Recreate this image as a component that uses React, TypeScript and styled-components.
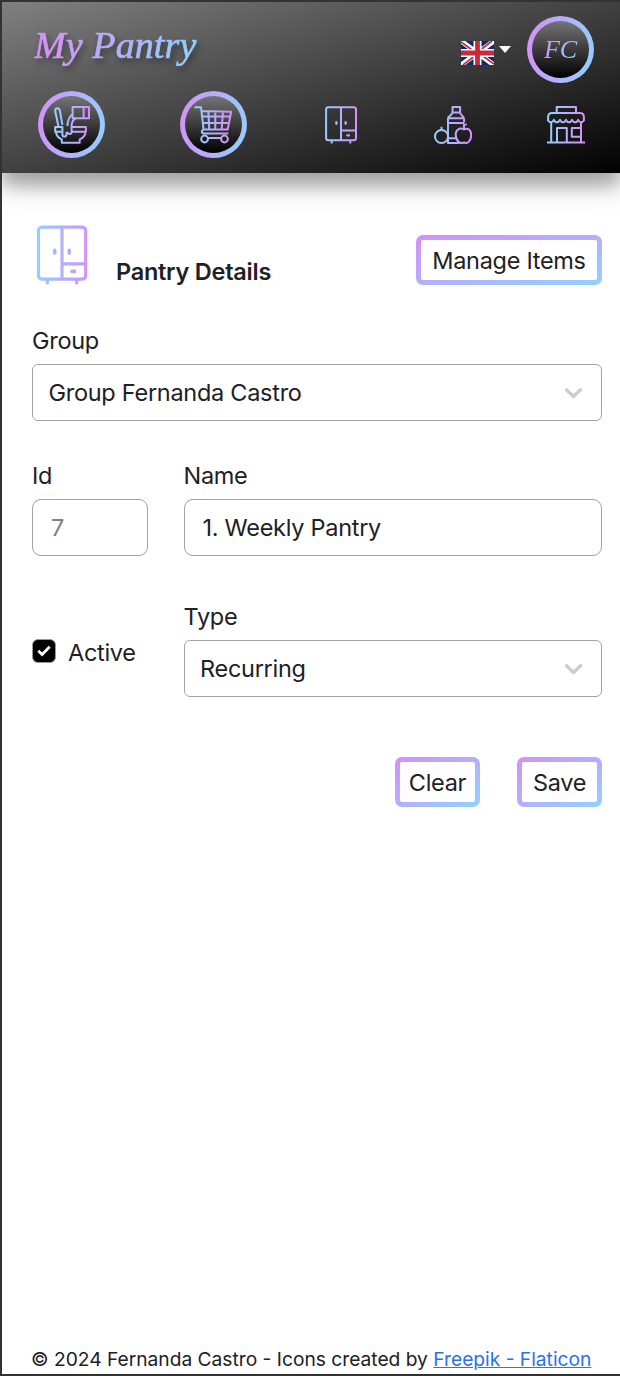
import React from "react";
import styled, { createGlobalStyle, css } from "styled-components";

const PINK = "#d68ff7";
const BLUE = "#91d1ff";

const GlobalStyle = createGlobalStyle`
  *, *::before, *::after { box-sizing: border-box; }
  body {
    margin: 0;
    background: #fff;
    color: #212124;
    font-family: Inter, "Liberation Sans", sans-serif;
    font-size: 24px;
  }
`;

const Page = styled.div`
  display: flex;
  flex-direction: column;
  height: 1376px;
  overflow: hidden;
  border: 2px solid #333335;
  border-right: 0;
  background: #fff;
`;

const Header = styled.header`
  display: flex;
  flex-direction: column;
  gap: 8px;
  height: 171px;
  padding: 14px 26px 0 32px;
  background: linear-gradient(to bottom right, #808080, #020202);
  box-shadow: 0 14px 26px rgba(0, 0, 0, 0.22), 0 12px 14px rgba(0, 0, 0, 0.2);
`;

const TopBar = styled.div`
  display: flex;
  align-items: center;
  height: 67px;
`;

const Logo = styled.h1`
  flex: 1;
  margin: 0 0 9px;
  font: italic 400 38px/50px "Apple Chancery", "Lucida Calligraphy", "Liberation Serif", serif;
  letter-spacing: 0.1px;
  filter: drop-shadow(2px 4px 3px rgba(0, 0, 0, 0.4));

  span {
    color: transparent;
    background: linear-gradient(to right, ${PINK}, ${BLUE});
    background-clip: text;
    padding-right: 4px;
    -webkit-text-stroke: 0.7px transparent;
  }
`;

const Language = styled.button`
  display: flex;
  align-items: center;
  gap: 5px;
  margin: 6px 16px 0 0;
  padding: 0;
  border: 0;
  background: none;
`;

const Caret = styled.i`
  margin-top: -7px;
  border: 6.5px solid transparent;
  border-top: 7px solid #fff;
  border-bottom: 0;
`;

const Ring = styled.div`
  display: grid;
  place-items: center;
  width: 67px;
  height: 67px;
  border: 5px solid transparent;
  border-radius: 50%;
  background: linear-gradient(#757575, #000) padding-box,
    linear-gradient(100deg, ${PINK}, ${BLUE}) border-box;
`;

const Initials = styled.span`
  font: italic 400 26px/30px "Apple Chancery", "Lucida Calligraphy", "Liberation Serif", serif;
  color: transparent;
  background: linear-gradient(to right, ${PINK}, ${BLUE});
  background-clip: text;
  padding: 0 2px;
`;

const Nav = styled.nav`
  display: flex;
  align-items: center;
  justify-content: space-between;
  height: 67px;
  margin: 0 9px 0 4px;
`;

const Main = styled.main`
  flex: 1;
  padding: 52px 18px 0 30px;
`;

const TitleRow = styled.div`
  display: flex;
  align-items: flex-start;
  height: 103px;
`;

const Title = styled.h2`
  flex: 1;
  margin: 32px 0 0 24px;
  font-size: 23.5px;
  font-weight: 600;
  line-height: 29px;
  letter-spacing: -0.25px;
`;

const Button = styled.button<{ $width: number }>`
  width: ${(p) => p.$width}px;
  height: 50px;
  padding: 0;
  border: 5px solid transparent;
  border-radius: 7px;
  background: linear-gradient(#fff, #fff) padding-box,
    linear-gradient(to bottom right, ${PINK}, ${BLUE}) border-box;
  color: #212124;
  font: inherit;
  font-size: 23.5px;
  letter-spacing: -0.3px;
  white-space: nowrap;
`;

const ManageButton = styled(Button)`
  margin-top: 10px;
`;

const FormGrid = styled.div`
  display: grid;
  grid-template-columns: 115.5px 418.5px;
  column-gap: 36px;
`;

const Field = styled.label<{ $height: number; $wide?: boolean }>`
  display: flex;
  flex-direction: column;
  height: ${(p) => p.$height}px;
  ${(p) => p.$wide && css`grid-column: 1 / -1;`}
`;

const Caption = styled.span`
  height: 36px;
  font-size: 23.5px;
  line-height: 26px;
  letter-spacing: -0.3px;
`;

const controlBox = css`
  width: 100%;
  height: 57px;
  border: 1.5px solid #a3a3a3;
  background: #fff;
  color: #212124;
  font: inherit;
  font-size: 23.5px;
  letter-spacing: -0.28px;
`;

const Input = styled.input`
  ${controlBox}
  padding: 0 18px;
  border-radius: 9px;
  &:disabled { color: #808080; }
`;

const Select = styled.div`
  ${controlBox}
  display: flex;
  align-items: center;
  justify-content: space-between;
  padding: 0 18px 0 15.5px;
  border-radius: 6px;
`;

const CheckRow = styled.label`
  display: flex;
  align-items: center;
  gap: 12px;
  height: 30px;
  margin-top: 33px;
  font-size: 23.5px;
  letter-spacing: -0.3px;
`;

const CheckBox = styled.span`
  display: grid;
  place-items: center;
  width: 24px;
  height: 24px;
  margin-top: -3px;
  border: 1.5px solid #999;
  border-radius: 6px;
  background: #000;
`;

const Actions = styled.div`
  display: flex;
  justify-content: flex-end;
  gap: 37px;
  margin-top: 12px;
`;

const Footer = styled.footer`
  height: 30px;
  padding-left: 29px;
  font-size: 19.2px;
  line-height: 31px;
  white-space: nowrap;

  a { color: #2a70f5; text-decoration: underline; }
`;

function Icon({ id, size = 38, children }: { id: string; size?: number; children: React.ReactNode }) {
  return (
    <svg width={size} height={size} viewBox="0 0 38 38" fill="none" stroke={`url(#${id})`} strokeWidth="2" strokeLinejoin="round">
      <defs>
        <linearGradient id={id} gradientUnits="userSpaceOnUse" x1="1" y1="0" x2="37" y2="0">
          <stop stopColor={BLUE} />
          <stop offset="1" stopColor={PINK} />
        </linearGradient>
      </defs>
      {children}
    </svg>
  );
}

const BowlIcon = () => (
  <Icon id="bowl">
    <path d="M5.6 21 2.3 5.7C1.4 1.7 6.1 1.1 6.9 4.7L9.4 19" />
    <path d="M19.6 1.1H36v11.1H19.6zM30.6 1.1v11.1M19.6 8c-3.2 2.2-4.9 6.4-5.2 12M23.4 12.2c-3.4 1-4.7 3.9-4.8 7.8" />
    <path d="M9.7 21H2.2v4.7h7.2M18.6 21h14.3v4.7H18.6M2.9 25.7c.4 3.6 2.3 6.4 5.9 7.7v3.4h17.9v-3.4c3.6-1.3 5.6-4.1 6-7.7" />
    <path d="M9.4 20.5v8.3c0 2.4 4 2.4 4 0v-2h1.4c.2 1.7 3.8 1.5 3.8-.9v-6" />
  </Icon>
);

const CartIcon = () => (
  <Icon id="cart">
    <path d="M.5 1.2H7l2.6 22.6M7.5 4.9l29.7.8-3.5 17.8H9.5M8.3 10.5h27.8M9 17h25.9M14.3 5.2l1 18.3M21.3 5.4v18.1M29 5.5l-1.3 18M9.5 23.7c-2.3.8-2.2 3.7.4 3.7h24.4" />
    <circle cx="10.6" cy="33" r="3.4" />
    <circle cx="30.5" cy="33" r="3.4" />
    <path d="M14 32h13" />
  </Icon>
);

const WardrobeIcon = ({ id, size }: { id: string; size?: number }) => (
  <Icon id={id} size={size}>
    <rect x="4.1" y="1.3" width="29.9" height="33" rx="2.3" />
    <path d="M19 1.3v33M19 24.6h15M9.7 34.3v3.3M28.3 34.3v3.3" />
    <path d="M14.4 16.1v1.7M23.6 16.1v1.7M25.3 29.4H27" strokeLinecap="round" strokeWidth="2.3" />
  </Icon>
);

const GroceriesIcon = () => (
  <Icon id="groceries">
    <path d="M18.5 1.1h7.6v5.3h-7.6zM18.5 6.4c-.2 3-4.5 3-4.5 6.5v24.2h11M26.1 6.4c.2 3 4 3.5 4 7v3M14 12.3h16M14 16.9h16M14 32.3h8.5" />
    <circle cx="7.5" cy="30.5" r="6.5" />
    <path d="M7.5 24v-3.3M30 23.4c-4.5-2.2-8.5.6-8.3 5.5.3 6.3 4.6 9.7 8.3 7.5 4 2.2 7.2-2.3 7.2-7.3 0-5.2-3.4-7.7-7.2-5.7zM30 23v-4.6h2.8" />
  </Icon>
);

const StoreIcon = () => (
  <Icon id="store">
    <path d="M9.7 7V1.1H29V7M4.5 7h29c2.2.2 3.4 2 3.4 4.5v3.1c-2.2 2.2-4.4 2.2-5.8-.8-1.3 3.3-4.5 3.3-6 0-1.6 3.3-4.6 3.3-6.1 0-1.5 3.3-4.5 3.3-6 0-1.6 3.3-4.7 3.3-6.1 0-1.4 3-4 3-5.8.8v-3.1C1.1 9 2.3 7.2 4.5 7z" />
    <path d="M4.2 16v20.4M34 16v20.4M10 36.4V22h9.8v14.4M34 22h-9.2v8.7H34M0 36.4h38" />
  </Icon>
);

const Flag = () => (
  <svg width="33" height="24" viewBox="0 0 33 24">
    <path fill="#0b2a70" d="M0 0h33v24H0z" />
    <path stroke="#fff" strokeWidth="5" d="m0 0 33 24M33 0 0 24" />
    <path stroke="#c62b3b" strokeWidth="1.7" d="m0 1 14 10M33 23 19 13M31 0 18 10M2 24l13-10" />
    <path stroke="#fff" strokeWidth="8" d="M16.5 0v24M0 12h33" />
    <path stroke="#c62b3b" strokeWidth="4.8" d="M16.5 0v24M0 12h33" />
  </svg>
);

const Chevron = () => (
  <svg width="20" height="14" viewBox="0 0 20 14" fill="none" stroke="#ccc" strokeWidth="3.3" strokeLinecap="round" strokeLinejoin="round">
    <path d="m3.5 3.7 7 6.8 7-6.8" />
  </svg>
);

export default function App() {
  return (
    <Page>
      <GlobalStyle />
      <Header>
        <TopBar>
          <Logo><span>My Pantry</span></Logo>
          <Language aria-label="Language"><Flag /><Caret /></Language>
          <Ring><Initials>FC</Initials></Ring>
        </TopBar>
        <Nav>
          <Ring><BowlIcon /></Ring>
          <Ring><CartIcon /></Ring>
          <WardrobeIcon id="wardrobe" />
          <GroceriesIcon />
          <StoreIcon />
        </Nav>
      </Header>
      <Main>
        <TitleRow>
          <WardrobeIcon id="wardrobe-large" size={60} />
          <Title>Pantry Details</Title>
          <ManageButton $width={186}>Manage Items</ManageButton>
        </TitleRow>
        <FormGrid>
          <Field as="div" $height={135} $wide>
            <Caption>Group</Caption>
            <Select>Group Fernanda Castro<Chevron /></Select>
          </Field>
          <Field $height={141}>
            <Caption>Id</Caption>
            <Input defaultValue="7" disabled />
          </Field>
          <Field $height={141}>
            <Caption>Name</Caption>
            <Input defaultValue="1. Weekly Pantry" />
          </Field>
          <CheckRow>
            <CheckBox>
              <svg width="14" height="12" viewBox="0 0 14 12" fill="none" stroke="#fff" strokeWidth="2.8">
                <path d="m1.3 5.7 3.8 3.8 7.6-7.7" />
              </svg>
            </CheckBox>
            Active
          </CheckRow>
          <Field as="div" $height={141}>
            <Caption>Type</Caption>
            <Select>Recurring<Chevron /></Select>
          </Field>
        </FormGrid>
        <Actions>
          <Button $width={85}>Clear</Button>
          <Button $width={85}>Save</Button>
        </Actions>
      </Main>
      <Footer>
        © 2024 Fernanda Castro - Icons created by <a href="#">Freepik - Flaticon</a>
      </Footer>
    </Page>
  );
}
